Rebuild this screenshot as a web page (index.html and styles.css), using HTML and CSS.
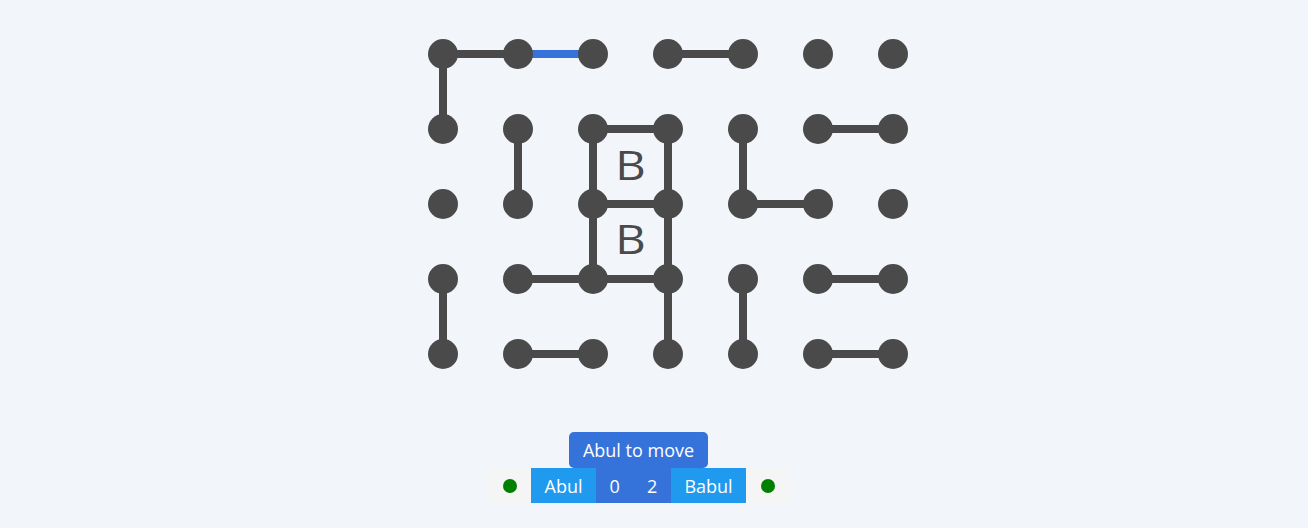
FILE: index.html
```html
<!DOCTYPE html>
<html>
<head>
<meta charset="utf-8">
<link rel="stylesheet" href="styles.css">
</head>
<body>
<main class="game">
  <svg class="board" width="500" height="350" viewBox="0 0 500 350">
    <g class="lines">
      <line x1="25" y1="25" x2="100" y2="25"/>
      <line x1="250" y1="25" x2="325" y2="25"/>
      <line x1="175" y1="100" x2="250" y2="100"/>
      <line x1="400" y1="100" x2="475" y2="100"/>
      <line x1="175" y1="175" x2="250" y2="175"/>
      <line x1="325" y1="175" x2="400" y2="175"/>
      <line x1="100" y1="250" x2="175" y2="250"/>
      <line x1="175" y1="250" x2="250" y2="250"/>
      <line x1="400" y1="250" x2="475" y2="250"/>
      <line x1="100" y1="325" x2="175" y2="325"/>
      <line x1="400" y1="325" x2="475" y2="325"/>
      <line x1="25" y1="25" x2="25" y2="100"/>
      <line x1="25" y1="250" x2="25" y2="325"/>
      <line x1="100" y1="100" x2="100" y2="175"/>
      <line x1="175" y1="100" x2="175" y2="175"/>
      <line x1="175" y1="175" x2="175" y2="250"/>
      <line x1="250" y1="100" x2="250" y2="175"/>
      <line x1="250" y1="175" x2="250" y2="250"/>
      <line x1="250" y1="250" x2="250" y2="325"/>
      <line x1="325" y1="100" x2="325" y2="175"/>
      <line x1="325" y1="250" x2="325" y2="325"/>
    </g>
    <line class="last" x1="100" y1="25" x2="175" y2="25"/>
    <g class="owners">
      <text transform="translate(212.5 151) scale(1.18 1)">B</text>
      <text transform="translate(212.5 225) scale(1.18 1)">B</text>
    </g>
    <g class="dots">
      <circle cx="25" cy="25" r="15"/><circle cx="100" cy="25" r="15"/><circle cx="175" cy="25" r="15"/><circle cx="250" cy="25" r="15"/><circle cx="325" cy="25" r="15"/><circle cx="400" cy="25" r="15"/><circle cx="475" cy="25" r="15"/>
      <circle cx="25" cy="100" r="15"/><circle cx="100" cy="100" r="15"/><circle cx="175" cy="100" r="15"/><circle cx="250" cy="100" r="15"/><circle cx="325" cy="100" r="15"/><circle cx="400" cy="100" r="15"/><circle cx="475" cy="100" r="15"/>
      <circle cx="25" cy="175" r="15"/><circle cx="100" cy="175" r="15"/><circle cx="175" cy="175" r="15"/><circle cx="250" cy="175" r="15"/><circle cx="325" cy="175" r="15"/><circle cx="400" cy="175" r="15"/><circle cx="475" cy="175" r="15"/>
      <circle cx="25" cy="250" r="15"/><circle cx="100" cy="250" r="15"/><circle cx="175" cy="250" r="15"/><circle cx="250" cy="250" r="15"/><circle cx="325" cy="250" r="15"/><circle cx="400" cy="250" r="15"/><circle cx="475" cy="250" r="15"/>
      <circle cx="25" cy="325" r="15"/><circle cx="100" cy="325" r="15"/><circle cx="175" cy="325" r="15"/><circle cx="250" cy="325" r="15"/><circle cx="325" cy="325" r="15"/><circle cx="400" cy="325" r="15"/><circle cx="475" cy="325" r="15"/>
    </g>
  </svg>
  <section class="panel">
    <div class="status">Abul to move</div>
    <div class="scorebar">
      <span class="side"><span class="turn"></span></span>
      <span class="name">Abul</span>
      <span class="score">0</span>
      <span class="score">2</span>
      <span class="name">Babul</span>
      <span class="side"><span class="turn"></span></span>
    </div>
  </section>
</main>
</body>
</html>
```
FILE: styles.css
```css
html, body {
  margin: 0;
  padding: 0;
  background: #f2f5fa;
  font-family: "Open Sans", "Noto Sans", sans-serif;
}
.game {
  width: 1308px;
  height: 528px;
  display: flex;
  flex-direction: column;
}
.board {
  display: block;
  margin: 28.5px 0 0 418px;
}
.lines line {
  stroke: #4a4a4a;
  stroke-width: 8;
}
.last {
  stroke: #3573db;
  stroke-width: 8;
}
.owners text {
  font-family: "Open Sans", "Noto Sans", sans-serif;
  font-size: 40px;
  fill: #4a4a4a;
  text-anchor: middle;
}
.dots circle {
  fill: #4a4a4a;
}
.panel {
  margin: 53.5px 0 0 488px;
  width: 302px;
  display: flex;
  flex-direction: column;
  align-items: center;
}
.status {
  height: 36px;
  box-sizing: border-box;
  display: flex;
  align-items: center;
  justify-content: center;
  background: #3573db;
  color: #fff;
  font-size: 18px;
  border-radius: 5px;
  width: 139px;
  margin-left: -1px;
}
.scorebar {
  display: flex;
  height: 35px;
  width: 302px;
  background: #f5f5f6;
  border-radius: 4px;
  font-size: 18px;
  color: #fff;
}
.side {
  width: 43px;
  display: flex;
  align-items: center;
  justify-content: center;
}
.side:last-child {
  width: 44px;
}
.turn {
  width: 14px;
  height: 14px;
  border-radius: 50%;
  background: #008000;
}
.name {
  display: flex;
  align-items: center;
  justify-content: center;
  background: #1f9aee;
  width: 65px;
}
.name:nth-child(5) {
  width: 75px;
}
.score {
  display: flex;
  align-items: center;
  justify-content: center;
  background: #3573db;
  width: 37.5px;
}
```
